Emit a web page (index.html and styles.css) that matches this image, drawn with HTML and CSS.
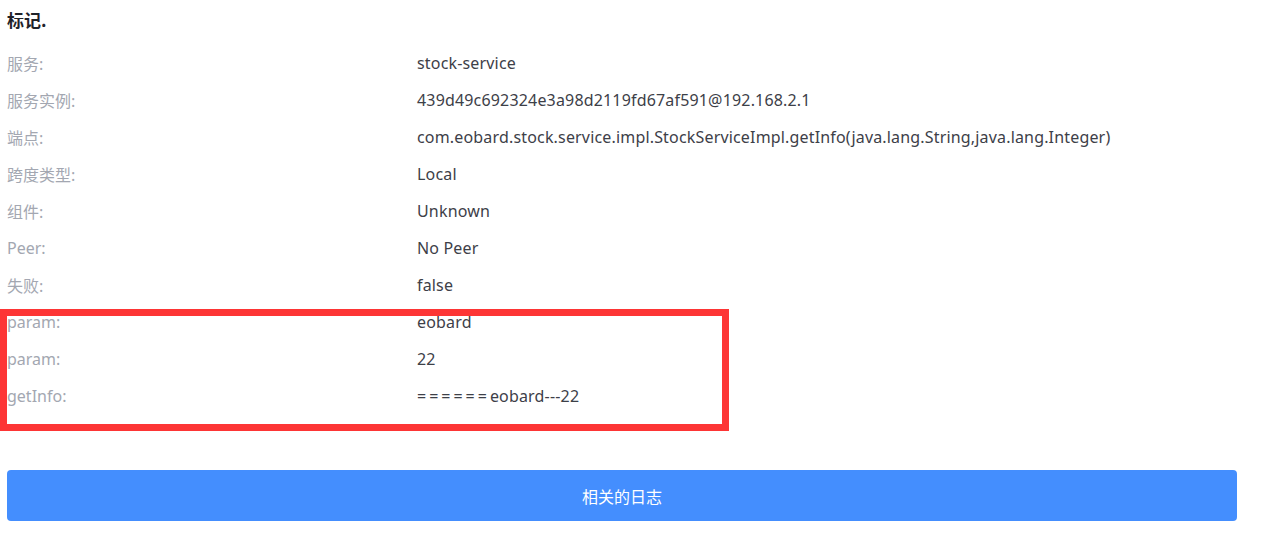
FILE: index.html
```html
<!DOCTYPE html>
<html lang="zh">
<head>
<meta charset="utf-8">
<title>标记</title>
<link rel="stylesheet" href="styles.css">
</head>
<body>
<div class="panel">
  <h3 class="title">标记.</h3>
  <div class="rows">
    <div class="row"><span class="label">服务:</span><span class="value">stock-service</span></div>
    <div class="row"><span class="label">服务实例:</span><span class="value">439d49c692324e3a98d2119fd67af591@192.168.2.1</span></div>
    <div class="row"><span class="label">端点:</span><span class="value">com.eobard.stock.service.impl.StockServiceImpl.getInfo(java.lang.String,java.lang.Integer)</span></div>
    <div class="row"><span class="label">跨度类型:</span><span class="value">Local</span></div>
    <div class="row"><span class="label">组件:</span><span class="value">Unknown</span></div>
    <div class="row"><span class="label">Peer:</span><span class="value">No Peer</span></div>
    <div class="row"><span class="label">失败:</span><span class="value">false</span></div>
    <div class="tags">
      <div class="row"><span class="label">param:</span><span class="value">eobard</span></div>
      <div class="row"><span class="label">param:</span><span class="value">22</span></div>
      <div class="row"><span class="label">getInfo:</span><span class="value"><span class="eq">======</span>eobard---22</span></div>
      <div class="highlight"></div>
    </div>
  </div>
  <button class="logs-btn" type="button">相关的日志</button>
</div>
</body>
</html>
```
FILE: styles.css
```css
html, body {
  margin: 0;
  padding: 0;
  background: #ffffff;
}
body {
  font-family: "Noto Sans", "Noto Sans CJK SC", sans-serif;
  font-size: 16px;
  color: #3d4048;
}
.panel {
  padding: 0 24px 0 7px;
}
.title {
  margin: 0;
  height: 44px;
  line-height: 40px;
  font-size: 17px;
  font-weight: 700;
  color: #1f2229;
  font-family: "Noto Sans CJK SC", sans-serif;
}
.row {
  display: flex;
  height: 37px;
  align-items: center;
}
.label {
  width: 410px;
  flex: none;
  color: #a3a7b1;
}
.value {
  color: #3d4048;
  white-space: nowrap;
  letter-spacing: 0.17px;
}
.eq {
  letter-spacing: 3px;
}
.tags {
  position: relative;
}
.highlight {
  position: absolute;
  left: -7px;
  top: 6px;
  width: 729px;
  height: 122px;
  box-sizing: border-box;
  border: 7px solid #fd3535;
  pointer-events: none;
}
.logs-btn {
  display: block;
  width: 100%;
  height: 51px;
  margin-top: 56px;
  border: none;
  border-radius: 4px;
  background: #448efe;
  color: #ffffff;
  font-family: "Noto Sans CJK SC", sans-serif;
  font-size: 16px;
  cursor: pointer;
}
```
